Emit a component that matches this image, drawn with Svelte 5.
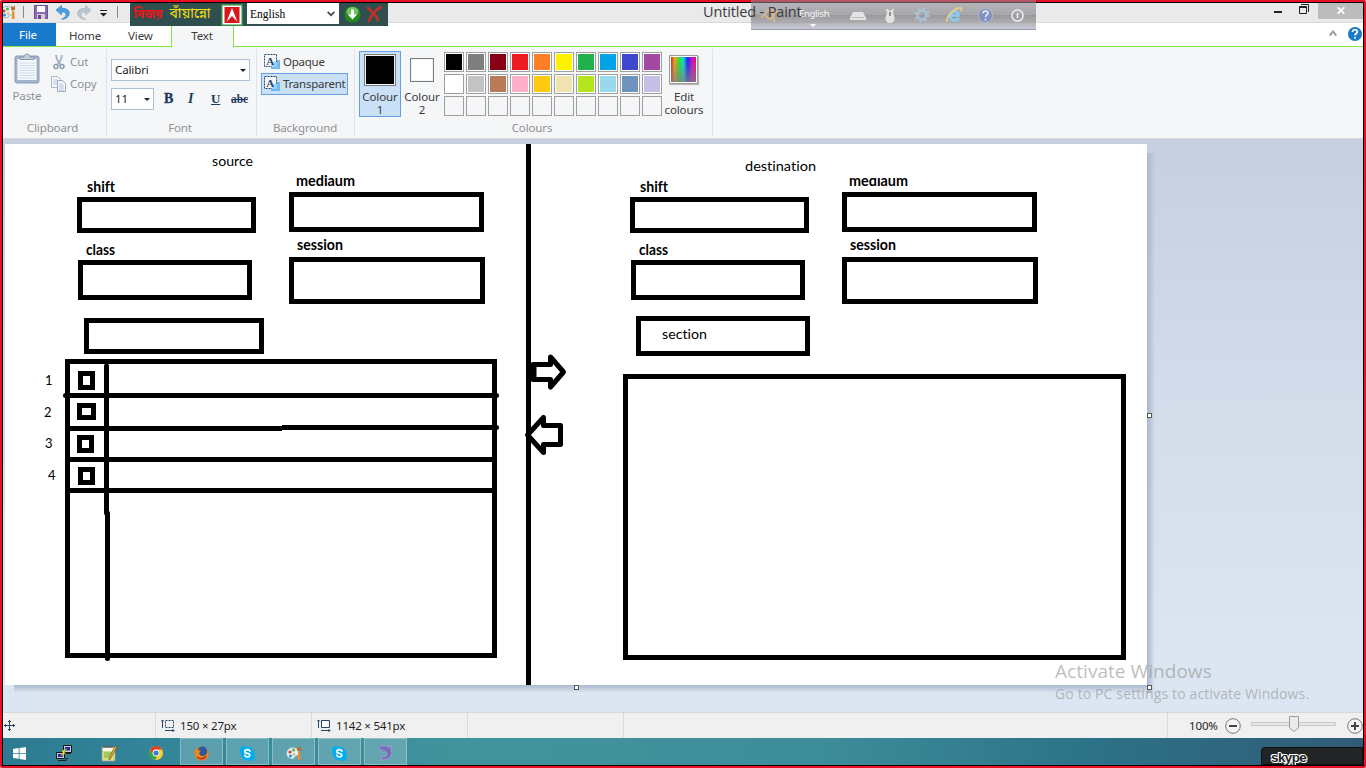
<script>
  const palette = [
    ['#000000', '#7f7f7f', '#880015', '#ed1c24', '#ff7f27', '#fff200', '#22b14c', '#00a2e8', '#3f48cc', '#a349a4'],
    ['#ffffff', '#c3c3c3', '#b97a57', '#ffaec9', '#ffc90e', '#efe4b0', '#b5e61d', '#99d9ea', '#7092be', '#c8bfe7'],
    Array(10).fill('')
  ];
  const swatches = palette.flat();

  // outer bounds of every rectangle: left, top, right, bottom
  const boxes = [
    [77, 197, 256, 233], [78, 260, 252, 300], [289, 192, 484, 232], [289, 257, 485, 304],
    [84, 318, 264, 354], [65, 359, 497, 658],
    [630, 197, 809, 233], [631, 260, 805, 300], [842, 192, 1037, 232], [842, 257, 1038, 304],
    [636, 316, 810, 356], [623, 374, 1126, 660],
    [78, 371, 95, 390], [77, 403, 96, 420], [77, 435, 94, 453], [78, 467, 95, 485]
  ];
  const labels = [
    ['source', 212, 166, 41, 0], ['destination', 745, 171, 71, 0], ['section', 662, 339, 45, 0],
    ['shift', 87, 192, 28, 1], ['class', 86, 255, 29, 1], ['session', 297, 250, 46, 1], ['mediaum', 296, 186, 59, 1],
    ['shift', 640, 192, 28, 1], ['class', 639, 255, 29, 1], ['session', 850, 250, 46, 1],
    ['1', 45, 385, 7.5, 0], ['2', 44, 416.500, 7.5, 0], ['3', 45, 447.500, 7.5, 0], ['4', 48, 479.500, 7.5, 0]
  ];
</script>

{#snippet paintIcon()}
  <svg width="16" height="16" viewBox="0 0 16 16">
    <path d="M7 2.5C3 2.5.5 5.2.5 8.4S3 14 6.5 14c2 0 1.5-1.8 2.8-2.6C10.600 10.600 13 11 13 8 13 4.700 10.500 2.500 7 2.500Z" fill="#e3f0f6" stroke="#7eabc0" stroke-width=".8" />
    <circle cx="4" cy="7" r="1.6" fill="#d9452b" /><circle cx="7.500" cy="5" r="1.500" fill="#5cb13c" />
    <circle cx="4.500" cy="11" r="1.500" fill="#2d8bd2" /><circle cx="8" cy="9.500" r="1.200" fill="#e6b82b" />
    <path d="M12 7h2.200l.3 8h-2.600z" fill="#ef8b2c" /><path d="M11.500 1.500 13 3l1.700-1.500.4 4.500h-4z" fill="#c96a23" />
  </svg>
{/snippet}

{#snippet skypeIcon()}
  <svg width="17" height="17" viewBox="0 0 17 17">
    <circle cx="5.500" cy="5.500" r="4.500" fill="#00aff0" /><circle cx="11.500" cy="11.500" r="4.500" fill="#00aff0" /><circle cx="8.500" cy="8.500" r="6.800" fill="#00aff0" />
    <path d="M11 6.200C10.500 5 9.500 4.700 8.400 4.700c-3.200 0-3.300 3-.9 3.500l1.800.4c2.500.6 1.700 3.400-.8 3.400-1.600 0-2.300-.7-2.700-1.800" fill="none" stroke="#fff" stroke-width="1.700" stroke-linecap="round" />
  </svg>
{/snippet}

{#snippet modeIcon()}
  <svg width="17" height="16" viewBox="0 0 17 16">
    <path d="M7 6h9v9H7z" fill="#71b9f5" />
    <path d="M.5.5h12v12H.5z" fill="#f4f8fc" stroke="#264568" stroke-dasharray="2 1" />
    <path d="M8 8h5v5H8z" fill="#9fd0fa" />
    <text x="2.200" y="10.700" class="serif-a">A</text>
  </svg>
{/snippet}

<div class="screen">
  <header class="titlebar">
    <div class="quick">
      <span class="app">{@render paintIcon()}</span>
      <i class="bar"></i>
      <svg class="save" width="14" height="14" viewBox="0 0 14 14"><path d="M.5.5h13v13H.5z" fill="#8c6bb1" stroke="#6c4d96" /><path d="M3 1h8v6H3z" fill="#fbfafd" /><path d="M3 9h8v5H3z" fill="#d4cce0" /><path d="M4 10h3v4H4z" fill="#654b87" /></svg>
      <svg class="undo" width="14" height="15" viewBox="0 0 14 15"><path d="M0 5 5.500.5v2.800C11 3 13.500 5.500 13.300 8.500 13 12 9.500 14.300 5.500 14.300 9 12.500 10.700 10.600 9.800 8.700 9 7.200 7.500 7 5.500 7.100V10Z" fill="#4aa0df" stroke="#3480c2" stroke-width=".6" /></svg>
      <svg class="redo" width="14" height="15" viewBox="0 0 14 15"><path d="M14 5 8.500.5v2.800C3 3 .5 5.500.7 8.500 1 12 4.500 14.300 8.500 14.300 5 12.500 3.300 10.600 4.200 8.700 5 7.200 6.500 7 8.500 7.100V10Z" fill="#b9c6d4" stroke="#9daebe" stroke-width=".6" /></svg>
      <svg class="more" width="7" height="7" viewBox="0 0 7 7"><path d="M0 .5h7" stroke="#222" /><path d="M0 3h7L3.500 6.500Z" fill="#222" /></svg>
      <i class="bar"></i>
    </div>
    <div class="bijoy">
      <span class="brand">বিজয়</span>
      <span class="edition">বাঁয়ান্নো</span>
      <svg width="22" height="22" viewBox="0 0 22 22"><path d="M0 0h22v22H0z" fill="#2f8d46" /><path d="M1.500 1.500h19v19h-19z" fill="#fff" /><path d="M3.500 3h15v16h-15z" fill="#d9141b" /><path d="m11 4 5.500 14L11 12l-5.500 6Z" fill="#fff" /><path d="m11 14 3 4H8z" fill="#d9141b" /></svg>
      <div class="lang">English<svg width="8" height="6" viewBox="0 0 8 6"><path d="m.7.8 3.300 3.500L7.300.8" fill="none" stroke="#444" stroke-width="1.700" /></svg></div>
      <svg class="get" width="17" height="17" viewBox="0 0 17 17"><circle cx="8.500" cy="8.500" r="8" fill="#26891d" /><ellipse cx="8.500" cy="5.500" rx="6" ry="4.500" fill="#71c45d" /><path d="M7 3.500h3v5h3.200L8.500 13.500 3.800 8.500H7z" fill="#fff" /></svg>
      <svg width="17" height="17" viewBox="0 0 17 17"><path d="M2 2c3 3 8 7 10 12M15 1C9 4 5 9 3 15" fill="none" stroke="#c13026" stroke-width="2.600" stroke-linecap="round" /></svg>
    </div>
    <div class="controls">
      <svg class="min" width="8" height="3" viewBox="0 0 8 3"><path d="M0 0h8v2H0z" fill="#222" /></svg>
      <svg class="restore" width="10" height="10" viewBox="0 0 10 10"><path d="M.5 2.500h7v7h-7zM1 3.500h6M2 .5h7.500V8" fill="none" stroke="#222" /></svg>
      <span class="close"><svg width="8" height="7" viewBox="0 0 8 7"><path d="m.7.300 6.600 6.400M7.300.3.7 6.700" stroke="#fff" stroke-width="1.700" /></svg></span>
    </div>
    <div class="ime">
      <svg class="glyph" width="18" height="14" viewBox="0 0 18 14"><path d="M4 3c4-3 8-1 8 3s-4 5-6 2-5-2-5 1M13 0v13M13 3h4" fill="none" stroke="#dcba83" stroke-width="2" /></svg>
      <span class="imelang">English<b></b></span>
      <svg class="k" width="16" height="8" viewBox="0 0 16 8"><path d="M3 0h10l3 6v2H0V6z" fill="#e4e4e4" /><path d="M2 5.500h12" stroke="#bbb" /></svg>
      <svg class="m" width="12" height="15" viewBox="0 0 12 15"><path d="M3 5 2 1l2 0 1.500 2h1L8 1h2L9 5l1.500 4c.5 4-1.500 6-4.500 6S1 13 1.500 9z" fill="#e2e2e0" /><path d="M6 4v4" stroke="#777" stroke-width="1.500" /></svg>
      <svg class="g" width="16" height="16" viewBox="0 0 16 16"><circle cx="8" cy="8" r="6.500" fill="none" stroke="#a9c0d2" stroke-width="2.500" stroke-dasharray="2.550 2.550" /><circle cx="8" cy="8" r="4.300" fill="none" stroke="#a9c0d2" stroke-width="2.600" /></svg>
      <svg class="e" width="16" height="16" viewBox="0 0 16 16"><path d="M13 11c-2.500 4-9 3-9-2.500S12.500 3 12.500 8.500H5" fill="none" stroke="#86cdf3" stroke-width="2.700" /><path d="M1 15C-1 11 9 0 15 1c1 .5.500 2-.5 3" fill="none" stroke="#edcf7d" stroke-width="1.600" /></svg>
      <svg class="q" width="15" height="15" viewBox="0 0 15 15"><circle cx="7.500" cy="7.500" r="7" fill="#8390bd" stroke="#b4bbd6" /><path d="M5 5.500c0-3.500 5.500-3 5 0-.3 1.500-2.500 1.500-2.500 3.500M7.500 10.500v2" fill="none" stroke="#e5e8f4" stroke-width="1.700" /></svg>
      <svg class="i" width="13" height="13" viewBox="0 0 13 13"><circle cx="6.500" cy="6.500" r="5.600" fill="none" stroke="#eee" stroke-width="1.500" /><path d="M6.500 4v5" stroke="#eee" stroke-width="1.600" /></svg>
    </div>
    <div class="title">Untitled - Paint</div>
  </header>

  <nav class="tabs">
    <span class="file">File</span><span class="home">Home</span><span class="view">View</span><span class="text">Text</span>
    <span class="rest">
      <svg width="8" height="7" viewBox="0 0 8 7"><path d="m.7 5.500 3.300-4 3.300 4" fill="none" stroke="#a0a0a0" stroke-width="2" /></svg>
      <svg width="14" height="14" viewBox="0 0 14 14"><circle cx="7" cy="7" r="7" fill="#1979ca" /><path d="M4.500 5C4.700 1.800 9.700 2.200 9.300 5 9 6.500 7 6.700 7 8.600M7 9.900v1.800" fill="none" stroke="#fff" stroke-width="1.700" /></svg>
    </span>
  </nav>

  <section class="ribbon">
    <div class="group clip">
      <div class="body">
        <div class="paste">
          <svg width="26" height="31" viewBox="0 0 26 31"><rect x="1" y="3" width="24" height="27" rx="2" fill="#a2b3cd" stroke="#8b9dba" /><path d="M3.500 6h19v21h-19z" fill="#f5f8fc" /><path d="M5 10h16M5 12.500h16M5 15h16M5 17.500h16M5 20h16M5 22.500h16M5 25h16" stroke="#d2dceb" /><path d="M6 6.500V4h4c0-4 6-4 6 0h4v2.500z" fill="#c5cedc" stroke="#8997ab" /></svg>
          Paste
        </div>
        <div class="cc">
          <span><svg width="16" height="16" viewBox="0 0 16 16"><path d="M5 1c.5 4 2 7 5 10M11 1c-.5 4-2 7-5 10" fill="none" stroke="#a2afc2" stroke-width="1.800" /><circle cx="5" cy="12.500" r="2" fill="none" stroke="#8f9db2" stroke-width="1.500" /><circle cx="11" cy="12.500" r="2" fill="none" stroke="#8f9db2" stroke-width="1.500" /></svg>Cut</span>
          <span><svg width="16" height="16" viewBox="0 0 16 16"><path d="M.5.5h6l3 3v8h-9z" fill="#f5f8fc" stroke="#a9b8cd" /><path d="M2 4h4M2 6h4M2 8h4" stroke="#bccadd" /><path d="M6.500 4.500h5l3 3v8h-8z" fill="#f5f8fc" stroke="#98a9c1" /><path d="M8 8h4M8 10h5M8 12h5M8 14h5" stroke="#b5c4d8" /></svg>Copy</span>
        </div>
      </div>
      <div class="name">Clipboard</div>
    </div>
    <div class="group font">
      <div class="body">
        <div class="combo family">Calibri<b></b></div>
        <div class="fmt">
          <div class="combo size">11<b></b></div>
          <span class="B">B</span><span class="I">I</span><span class="U">U</span><span class="S">abc</span>
        </div>
      </div>
      <div class="name">Font</div>
    </div>
    <div class="group back">
      <div class="body">
        <div class="mode">{@render modeIcon()}Opaque</div>
        <div class="mode on">{@render modeIcon()}Transparent</div>
      </div>
      <div class="name">Background</div>
    </div>
    <div class="group colours">
      <div class="body">
        <div class="pick one"><i></i>Colour<br />1</div>
        <div class="pick two"><i></i>Colour<br />2</div>
        <div class="grid">
          {#each swatches as c}<i class:empty={!c} style:background-color={c || null}></i>{/each}
        </div>
        <div class="edit"><i></i>Edit<br />colours</div>
      </div>
      <div class="name">Colours</div>
    </div>
  </section>

  <main class="work">
    <svg class="paper" width="1142" height="541" viewBox="5 144 1142 541">
      <path d="M5 144h1142v541H5z" fill="#fff" />
      <g fill="none" stroke="#000" stroke-width="5" shape-rendering="crispEdges">
        {#each boxes as [l, t, r, b]}<rect x={l + 2.5} y={t + 2.5} width={r - l - 5} height={b - t - 5} />{/each}
        <path d="M528.500 144v541M65 428.500h217M282 427.500h215M67 459.500h428M67 490.500h428" />
      </g>
      <g fill="none" stroke="#000" stroke-width="5" stroke-linecap="round" stroke-linejoin="round">
        <path d="M65.500 395.500h431M495 427.500h1.500M106.500 366v147M107.500 513v145.500" />
        <path d="M533 364.500h17.500V357l13 15-13 15v-7.500H533z" />
        <path d="M534 364v16" stroke-linecap="butt" />
        <path d="M560.500 425.500V444.500H543.500V452.500l-16-17.500 16-17.500v8z" />
      </g>
      {#each labels as [t, x, y, w, bold]}<text {x} {y} class:bold textLength={w} lengthAdjust="spacingAndGlyphs">{t}</text>{/each}
      <svg x="845" y="178" width="70" height="14" viewBox="845 178 70 14"><text x="849" y="186" class="bold" textLength="59" lengthAdjust="spacingAndGlyphs">mediaum</text></svg>
    </svg>
    <i class="shade right"></i><i class="shade below"></i>
    <i class="grip a"></i><i class="grip b"></i><i class="grip c"></i>
    <div class="activate"><strong>Activate Windows</strong><span>Go to PC settings to activate Windows.</span></div>
  </main>

  <footer class="status">
    <span class="cell pos"><svg width="11" height="11" viewBox="0 0 11 11"><path d="M5.500 0v11M0 5.500h11M4 2l1.500-1.500L7 2M4 9l1.500 1.500L7 9M2 4 .5 5.500 2 7M9 4l1.500 1.500L9 7" fill="none" stroke="#264568" /></svg></span>
    <span class="cell sel"><svg width="14" height="13" viewBox="0 0 14 13"><path d="M1.500 9V1M0 2.500 1.500 1 3 2.500M4 11.500h9M11.500 10l1.500 1.500-1.500 1.500" fill="none" stroke="#264568" /><path d="M4.500 1.500h8v7h-8z" fill="none" stroke="#264568" stroke-dasharray="2 1" /></svg>150 × 27px</span>
    <span class="cell dim"><svg width="14" height="13" viewBox="0 0 14 13"><path d="M1.500 9V1M0 2.500 1.500 1 3 2.500M4 11.500h9M11.500 10l1.500 1.500-1.500 1.500" fill="none" stroke="#264568" /><path d="M4.500 1.500h8v7h-8z" fill="#fff" stroke="#264568" /></svg>1142 × 541px</span>
    <span class="cell none"></span><span class="cell fill"></span>
    <span class="zoom">100%
      <svg class="z1" width="16" height="16" viewBox="0 0 16 16"><circle cx="8" cy="8" r="7.300" fill="#f5f5f5" stroke="#777" /><path d="M4 8h8" stroke="#444" stroke-width="2" /></svg>
      <svg class="track" width="86" height="16" viewBox="0 0 86 16"><path d="M.5 6.500h84v3H.5z" fill="#e7e7e7" stroke="#c9c9c9" /><path d="M38.500.5h9V12L43 15.500 38.500 12z" fill="#ebebeb" stroke="#9c9c9c" /></svg>
      <svg class="z2" width="16" height="16" viewBox="0 0 16 16"><circle cx="8" cy="8" r="7.300" fill="#f5f5f5" stroke="#777" /><path d="M4 8h8M8 4v8" stroke="#444" stroke-width="2" /></svg>
    </span>
  </footer>

  <div class="taskbar">
    <span class="start"><svg width="13" height="13" viewBox="0 0 13 13"><path d="M0 2 5.700 1v5H0zM6.500.9 13 0v6H6.500zM0 6.800h5.700v5L0 11zM6.500 6.800H13V13l-6.500-1z" fill="#fff" /></svg></span>
    <span><svg width="16" height="16" viewBox="0 0 16 16"><path d="M7.500.5h8v7h-8zM.5 7.500h8v6h-8z" fill="#cfcfcf" stroke="#111" /><path d="M9 2h5v3.500H9zM2 9h5v3H2z" fill="#1528b8" /><path d="M2 15.500h8v-2h2M8 8.500h7" fill="none" stroke="#222" /><path d="m12 3-4 4 2 1-6 4 3-5-2-1z" fill="#ffe91f" stroke="#444" stroke-width=".4" /></svg></span>
    <span><svg width="17" height="17" viewBox="0 0 17 17"><path d="M1 2h13v14H1z" fill="#f7f9ef" stroke="#87906d" /><path d="M2 6h11v9H2z" fill="#cbe584" /><path d="M3 8h8M3 10h8M3 12h7" stroke="#7eaa39" /><path d="M3 1v2M5 1v2M7 1v2M9 1v2M11 1v2" stroke="#444" /><path d="m14 1 2 1-6 11-2 2 .5-3z" fill="#e6a92a" stroke="#754c16" stroke-width=".6" /></svg></span>
    <span><svg width="14" height="14" viewBox="0 0 14 14"><circle cx="7" cy="7" r="7" fill="#f9cf2b" /><path d="M1 3.500A7 7 0 0 1 13.100 3.500H7A3.500 3.500 0 0 0 4 8.500Z" fill="#df3d2d" /><path d="M1 3.500 4 8.800C5 10.500 6.500 10.700 8 10.500L6.300 14A7 7 0 0 1 1 3.500Z" fill="#34a04b" /><circle cx="7" cy="7" r="3.400" fill="#fff" /><circle cx="7" cy="7" r="2.600" fill="#3d79d8" /></svg></span>
    <span class="open"><svg width="15" height="15" viewBox="0 0 15 15"><circle cx="7.500" cy="7.500" r="7" fill="#e87819" /><circle cx="8.500" cy="5.500" r="5" fill="#28599f" /><path d="M1 3c1 1 2 .5 3 1l3 1-2 2c1 4 6 4 8 0 1-1-.5-4-1-5 4 4 3 8 1 10-3 4-9 3-11-.5C.5 8.500.5 5.500 1 3" fill="#ed861f" /><path d="M3 11c3 3 7 2 9-1" stroke="#b93319" stroke-width="1.500" fill="none" /></svg></span>
    <span class="open">{@render skypeIcon()}</span>
    <span class="open">{@render paintIcon()}</span>
    <span class="open">{@render skypeIcon()}</span>
    <span class="open"><svg width="15" height="16" viewBox="0 0 15 16"><path d="M.5 3C3 .5 7 0 10 2l3.500-1-.8 3c2.500 5 0 9.500-4.700 10.500L2 15.500l2.500-2L2 11.500l5 .3c2.500-1 2.500-4 .5-5.500l-3 1.500.5-2.500C3 5 1.500 4 .5 3Z" fill="#786db6" stroke="#aaa5dc" stroke-width=".7" /></svg></span>
    <div class="call">skype</div>
  </div>
  <i class="frame"></i>
</div>

<style>
  :global(body) { margin: 0; overflow: hidden; }
  * { box-sizing: border-box; }
  svg { display: block; flex: none; }
  .screen { position: relative; width: 1366px; height: 768px; padding: 3px; display: flex; flex-direction: column; overflow: hidden; background: #fff; font: 11.5px/16px "Noto Sans", "Open Sans", sans-serif; letter-spacing: -.12px; color: #3b3b3b; }
  .frame { position: absolute; inset: 0; border: 2px solid #e81123; box-shadow: inset 0 0 0 1px #000; border-radius: 2px; pointer-events: none; }

  .titlebar { position: relative; height: 20px; flex: none; display: flex; background: #eaeaea; border-bottom: 1px solid #d8d8d8; }
  .quick { width: 127px; flex: none; display: flex; align-items: flex-start; padding-top: 2px; }
  .app { margin: -1px 7px 0 -3px; width: 16px; }
  .bar { width: 1px; height: 12px; background: #888; margin-top: 1px; }
  .save { margin-left: 10px; } .undo { margin-left: 8px; } .redo { margin-left: 7px; } .more { margin: 5px 10px 0 9px; }
  .bijoy { position: relative; z-index: 2; width: 258px; height: 23px; flex: none; display: flex; align-items: center; background: #2f4f4f; overflow: hidden; letter-spacing: 0; }
  .brand { width: 34px; text-align: center; margin-left: 1px; color: #e8151a; font: bold 12px/20px "Noto Sans Bengali", "Noto Sans", sans-serif; white-space: nowrap; }
  .edition { width: 50px; margin-right: 6px; text-align: center; color: #f2dc12; font: 14px/20px "Noto Sans Bengali", "Noto Sans", sans-serif; white-space: nowrap; }
  .lang { width: 92px; height: 21px; margin: -2px 5px 0 4px; padding: 0 4px 0 3px; display: flex; align-items: center; justify-content: space-between; background: #fff; color: #000; font: 11.500px/20px "Liberation Serif", serif; }
  .get { margin-right: 5px; }
  .controls { flex: 1; display: flex; justify-content: flex-end; }
  .min { margin: 8px 17px 0 0; } .restore { margin: 1px 9px 0 0; }
  .close { width: 45px; height: 16px; background: #bcbcbc; display: flex; align-items: center; justify-content: center; padding-bottom: 2px; }
  .title { position: absolute; z-index: 4; left: 700px; top: -1px; font: 14.500px/20px "Open Sans", sans-serif; letter-spacing: -.15px; color: #3a3a3a; white-space: nowrap; }
  .ime { position: absolute; z-index: 3; left: 748px; top: -3px; width: 285px; height: 30px; display: flex; align-items: flex-start; background: linear-gradient(rgba(140, 140, 150, .55), rgba(140, 140, 145, .7) 50%, rgba(125, 125, 125, .75) 52%, rgba(150, 150, 155, .75) 75%, rgba(185, 187, 205, .8)); border-bottom: 1px solid #9a9ba7; }
  .glyph { margin: 9px 0 0 10px; opacity: .85; }
  .imelang { position: relative; margin-left: 20px; width: 32px; font-size: 9.500px; line-height: 12px; margin-top: 8px; color: #f6f6f6; letter-spacing: -.3px; }
  .imelang b { position: absolute; left: 11px; top: 16px; border: 3.500px solid transparent; border-top-color: #fff; border-bottom: 0; }
  .k { margin: 12px 0 0 19px; } .m { margin: 8px 0 0 18px; } .g { margin: 7px 0 0 18px; } .e { margin: 7px 0 0 16px; } .q { margin: 8px 0 0 16px; } .i { margin: 9px 0 0 18px; }

  .tabs { height: 24px; flex: none; display: flex; background: #fff; line-height: 25px; }
  .tabs > span { border-bottom: 1px solid #83e63e; }
  .tabs .file { width: 53px; text-align: center; background: #1979ca; color: #fff; border-bottom: 0; height: 23px; line-height: 24px; padding-right: 3px; box-shadow: 0 1px #83e63e; }
  .home { width: 58px; text-align: center; } .view { width: 57px; padding-left: 14px; }
  .tabs .text { width: 63px; margin-right: 1px; height: 24px; text-align: center; line-height: 25px; padding-right: 1px; background: linear-gradient(#fff, #f4f6f8 8px); border: solid #83e63e; border-width: 0 1px; }
  .rest { flex: 1; margin-left: -1px; display: flex; justify-content: flex-end; align-items: center; gap: 11px; padding: 0 1px 2px 0; }

  .ribbon { height: 92px; flex: none; display: flex; background: #f4f6f8; border-bottom: 1px solid #d5d8dc; }
  .group { position: relative; border-right: 1px solid #e0e2e5; height: 87px; margin-top: 2px; display: flex; flex-direction: column; }
  .body { height: 70px; }
  .name { text-align: center; color: #8f9193; line-height: 16px; margin-top: 3px; }
  .clip { width: 104px; } .font { width: 150px; } .back { width: 98px; } .colours { width: 358px; }
  .clip .name { padding-right: 4px; } .font .name { padding-right: 3px; } .back .name { padding-right: 1px; } .colours .name { padding-right: 3px; }
  .clip .body { display: flex; color: #8e9093; }
  .paste { width: 48px; display: flex; flex-direction: column; align-items: center; padding-top: 4px; gap: 4px; }
  .cc span { display: flex; gap: 3px; height: 22px; align-items: center; } .cc { padding-top: 2px; }
  .font .body { padding: 10px 0 0 4px; }
  .combo { height: 22px; border: 1px solid #abbfd6; background: #fff; color: #222; padding: 0 3px; display: flex; justify-content: space-between; align-items: center; }
  .combo b { border: 3px solid transparent; border-top: 3.500px solid #222; border-bottom: 0; }
  .family { width: 139px; } .size { width: 43px; }
  .fmt { display: flex; align-items: center; margin-top: 7px; color: #1e395b; font: bold 13px/20px "Liberation Serif", serif; }
  .size { font: 11.500px/16px "Noto Sans", sans-serif; }
  .B { margin-left: 10px; width: 24px; font-size: 14px; -webkit-text-stroke: .3px #1e395b; } .I { width: 23px; font-style: italic; font-size: 14px; } .U { width: 20px; text-decoration: underline; } .S { text-decoration: line-through; font-size: 11.500px; }
  .back .body { padding: 2px 0 0 4px; }
  .mode { width: 87px; height: 22px; border: 1px solid transparent; display: flex; align-items: center; gap: 2px; padding-left: 2px; letter-spacing: -.25px; white-space: nowrap; }
  .on { border-color: #62a2e4; background: #c9e0f7; }
  .serif-a { font: bold 11px "Liberation Serif", serif; fill: #264568; letter-spacing: 0; }
  .colours .body { display: flex; padding-left: 4px; }
  .pick { width: 42px; height: 66px; margin-top: 2px; text-align: center; line-height: 13px; border: 1px solid transparent; }
  .pick i { display: block; margin: 2px auto 4px; width: 32px; height: 32px; border: 1px solid #7b7b7b; background: #000; box-shadow: inset 0 0 0 1px #eef4fb; }
  .one { border-color: #62a2e4; background: #c9e0f7; }
  .two i { width: 24px; height: 24px; margin: 6px auto 8px; background: #fff; }
  .grid { display: grid; grid-template-columns: repeat(10, 20px); grid-auto-rows: 20px; gap: 2px; margin: 3px 0 0 1px; height: 64px; }
  .grid i { border: 1px solid #a0a0a0; box-shadow: inset 0 0 0 1px #fff; }
  .grid .empty { box-shadow: none; }
  .edit { width: 42px; margin-left: 1px; padding-top: 6px; text-align: center; line-height: 13px; }
  .edit i { display: block; width: 29px; height: 29px; margin: 0 auto 6px 6px; border: 1px solid #9a9a9a; padding: 1px; background: linear-gradient(transparent 10%, rgba(128, 128, 128, .75)) content-box, linear-gradient(90deg, #e61e1e, #f0a020 14%, #30e020 32%, #10d8d8 50%, #2020f0 67%, #d010d0 85%, #f01050) content-box, #fff; box-shadow: 1px 1px 1px #bbb; }

  .work { position: relative; height: 573px; flex: none; padding: 5px 0 0 2px; background: linear-gradient(#c5cfe0, #d2dcea 45%, #dce6f2 90%); letter-spacing: 0; }
  .paper { position: relative; z-index: 1; font: 14.200px Lato, sans-serif; font-variant-ligatures: none; }
  .bold { font-weight: 700; }
  .shade { position: absolute; }
  .right { left: 1144px; top: 14px; width: 8px; height: 540px; background: linear-gradient(90deg, #aab7cd, rgba(180, 193, 213, 0)); }
  .below { left: 11px; top: 546px; width: 1133px; height: 8px; background: linear-gradient(#abb9ce, rgba(185, 198, 217, 0)); }
  .grip { position: absolute; z-index: 2; width: 5px; height: 5px; background: #fff; border: 1px solid #555; }
  .a { left: 1144px; top: 274px; } .b { left: 571px; top: 546px; } .c { left: 1144px; top: 546px; }
  .activate { position: absolute; z-index: 3; left: 1052px; top: 519px; color: rgba(145, 145, 145, .6); font-family: "Open Sans", sans-serif; font-size: 14px; white-space: nowrap; }
  .activate strong { display: block; font-weight: 400; font-size: 19px; line-height: 26px; letter-spacing: .05px; } .activate span { display: block; line-height: 20px; letter-spacing: .13px; }

  .status { height: 26px; flex: none; display: flex; background: #f0f0f0; border-top: 1px solid #d7d7d7; color: #1e1e1e; }
  .cell { width: 156px; display: flex; align-items: center; gap: 5px; padding-left: 5px; border-right: 1px solid #dadada; letter-spacing: -.2px; }
  .pos { width: 153px; padding-left: 1px; } .fill { flex: 1; }
  .zoom { width: 195px; display: flex; align-items: center; padding-left: 21px; }
  .z1 { margin-left: 7px; } .track { margin-left: 10px; margin-top: -3px; } .z2 { margin-left: 10px; }

  .taskbar { position: relative; height: 27px; flex: none; display: flex; background: linear-gradient(90deg, #2d7b91, #34889a 15%, #42949c 35%, #3d8d99 60%, #2c7288 80%, #315b76); }
  .taskbar > span { width: 43px; margin-right: 3px; height: 27px; display: flex; align-items: center; justify-content: center; padding-top: 3px; }
  .taskbar .start { width: 33px; margin-right: 6px; }
  .taskbar .open { background: rgba(255, 255, 255, .2); border: 1px solid rgba(255, 255, 255, .28); }
  .call { position: absolute; right: 0; bottom: 0; width: 102px; height: 18px; padding-left: 9px; border-radius: 4px 0 0 0; background: #222526; border: 1px solid #0c0f12; color: #222; font: bold 13.500px/20px "Liberation Sans", sans-serif; letter-spacing: -.6px; text-shadow: 1px 0 #fff, -1px 0 #fff, 0 1px #fff, 0 -1px #fff, 1px 1px #fff, -1px -1px #fff; }
</style>
